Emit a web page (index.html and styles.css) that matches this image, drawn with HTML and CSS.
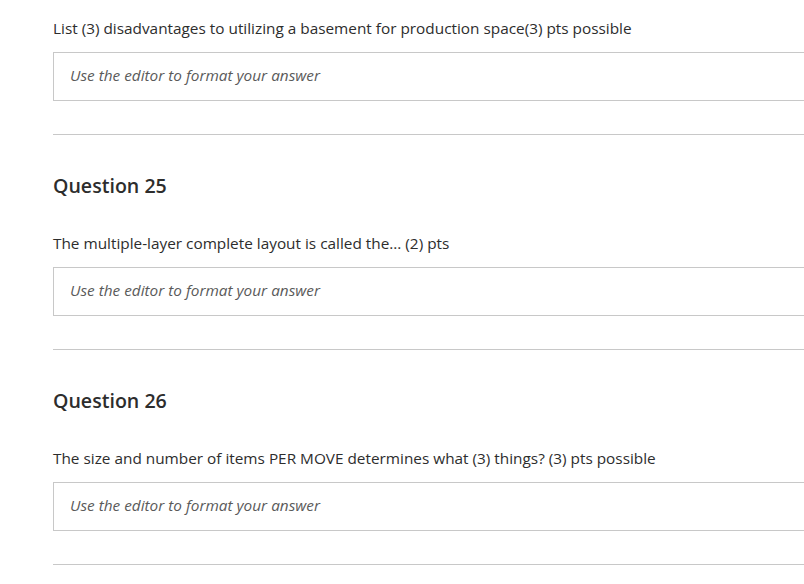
FILE: index.html
```html
<!DOCTYPE html>
<html>
<head>
<meta charset="utf-8">
<link rel="stylesheet" href="styles.css">
</head>
<body>
<main class="page">
  <section class="question">
    <p class="prompt">List (3) disadvantages to utilizing a basement for production space(3) pts possible</p>
    <div class="answer">Use the editor to format your answer</div>
  </section>
  <section class="question">
    <h2 class="title">Question 25</h2>
    <p class="prompt">The multiple-layer complete layout is called the... (2) pts</p>
    <div class="answer">Use the editor to format your answer</div>
  </section>
  <section class="question">
    <h2 class="title">Question 26</h2>
    <p class="prompt">The size and number of items PER MOVE determines what (3) things? (3) pts possible</p>
    <div class="answer">Use the editor to format your answer</div>
  </section>
</main>
</body>
</html>
```

FILE: styles.css
```css
html, body {
  margin: 0;
  padding: 0;
  background: #fff;
  overflow: hidden;
}
body {
  font-family: "Open Sans", "Liberation Sans", sans-serif;
  color: #2d2d2d;
}
.page {
  padding: 18px 0 0 53px;
  width: 780px;
}
.question {
  border-bottom: 1px solid #c8c8c8;
  padding-bottom: 33px;
  margin-bottom: 37px;
}
.title {
  margin: 0 0 33px;
  font-size: 19.6px;
  line-height: 28px;
  font-weight: 600;
  color: #2d2d2d;
}
.prompt {
  margin: 0 0 14px;
  font-size: 15.35px;
  line-height: 20px;
  color: #2d2d2d;
}
.answer {
  box-sizing: border-box;
  height: 49px;
  border: 1px solid #c8c8c8;
  padding: 0 16px 3px;
  display: flex;
  align-items: center;
  font-size: 15.35px;
  font-style: italic;
  color: #5a5a5a;
}
```
